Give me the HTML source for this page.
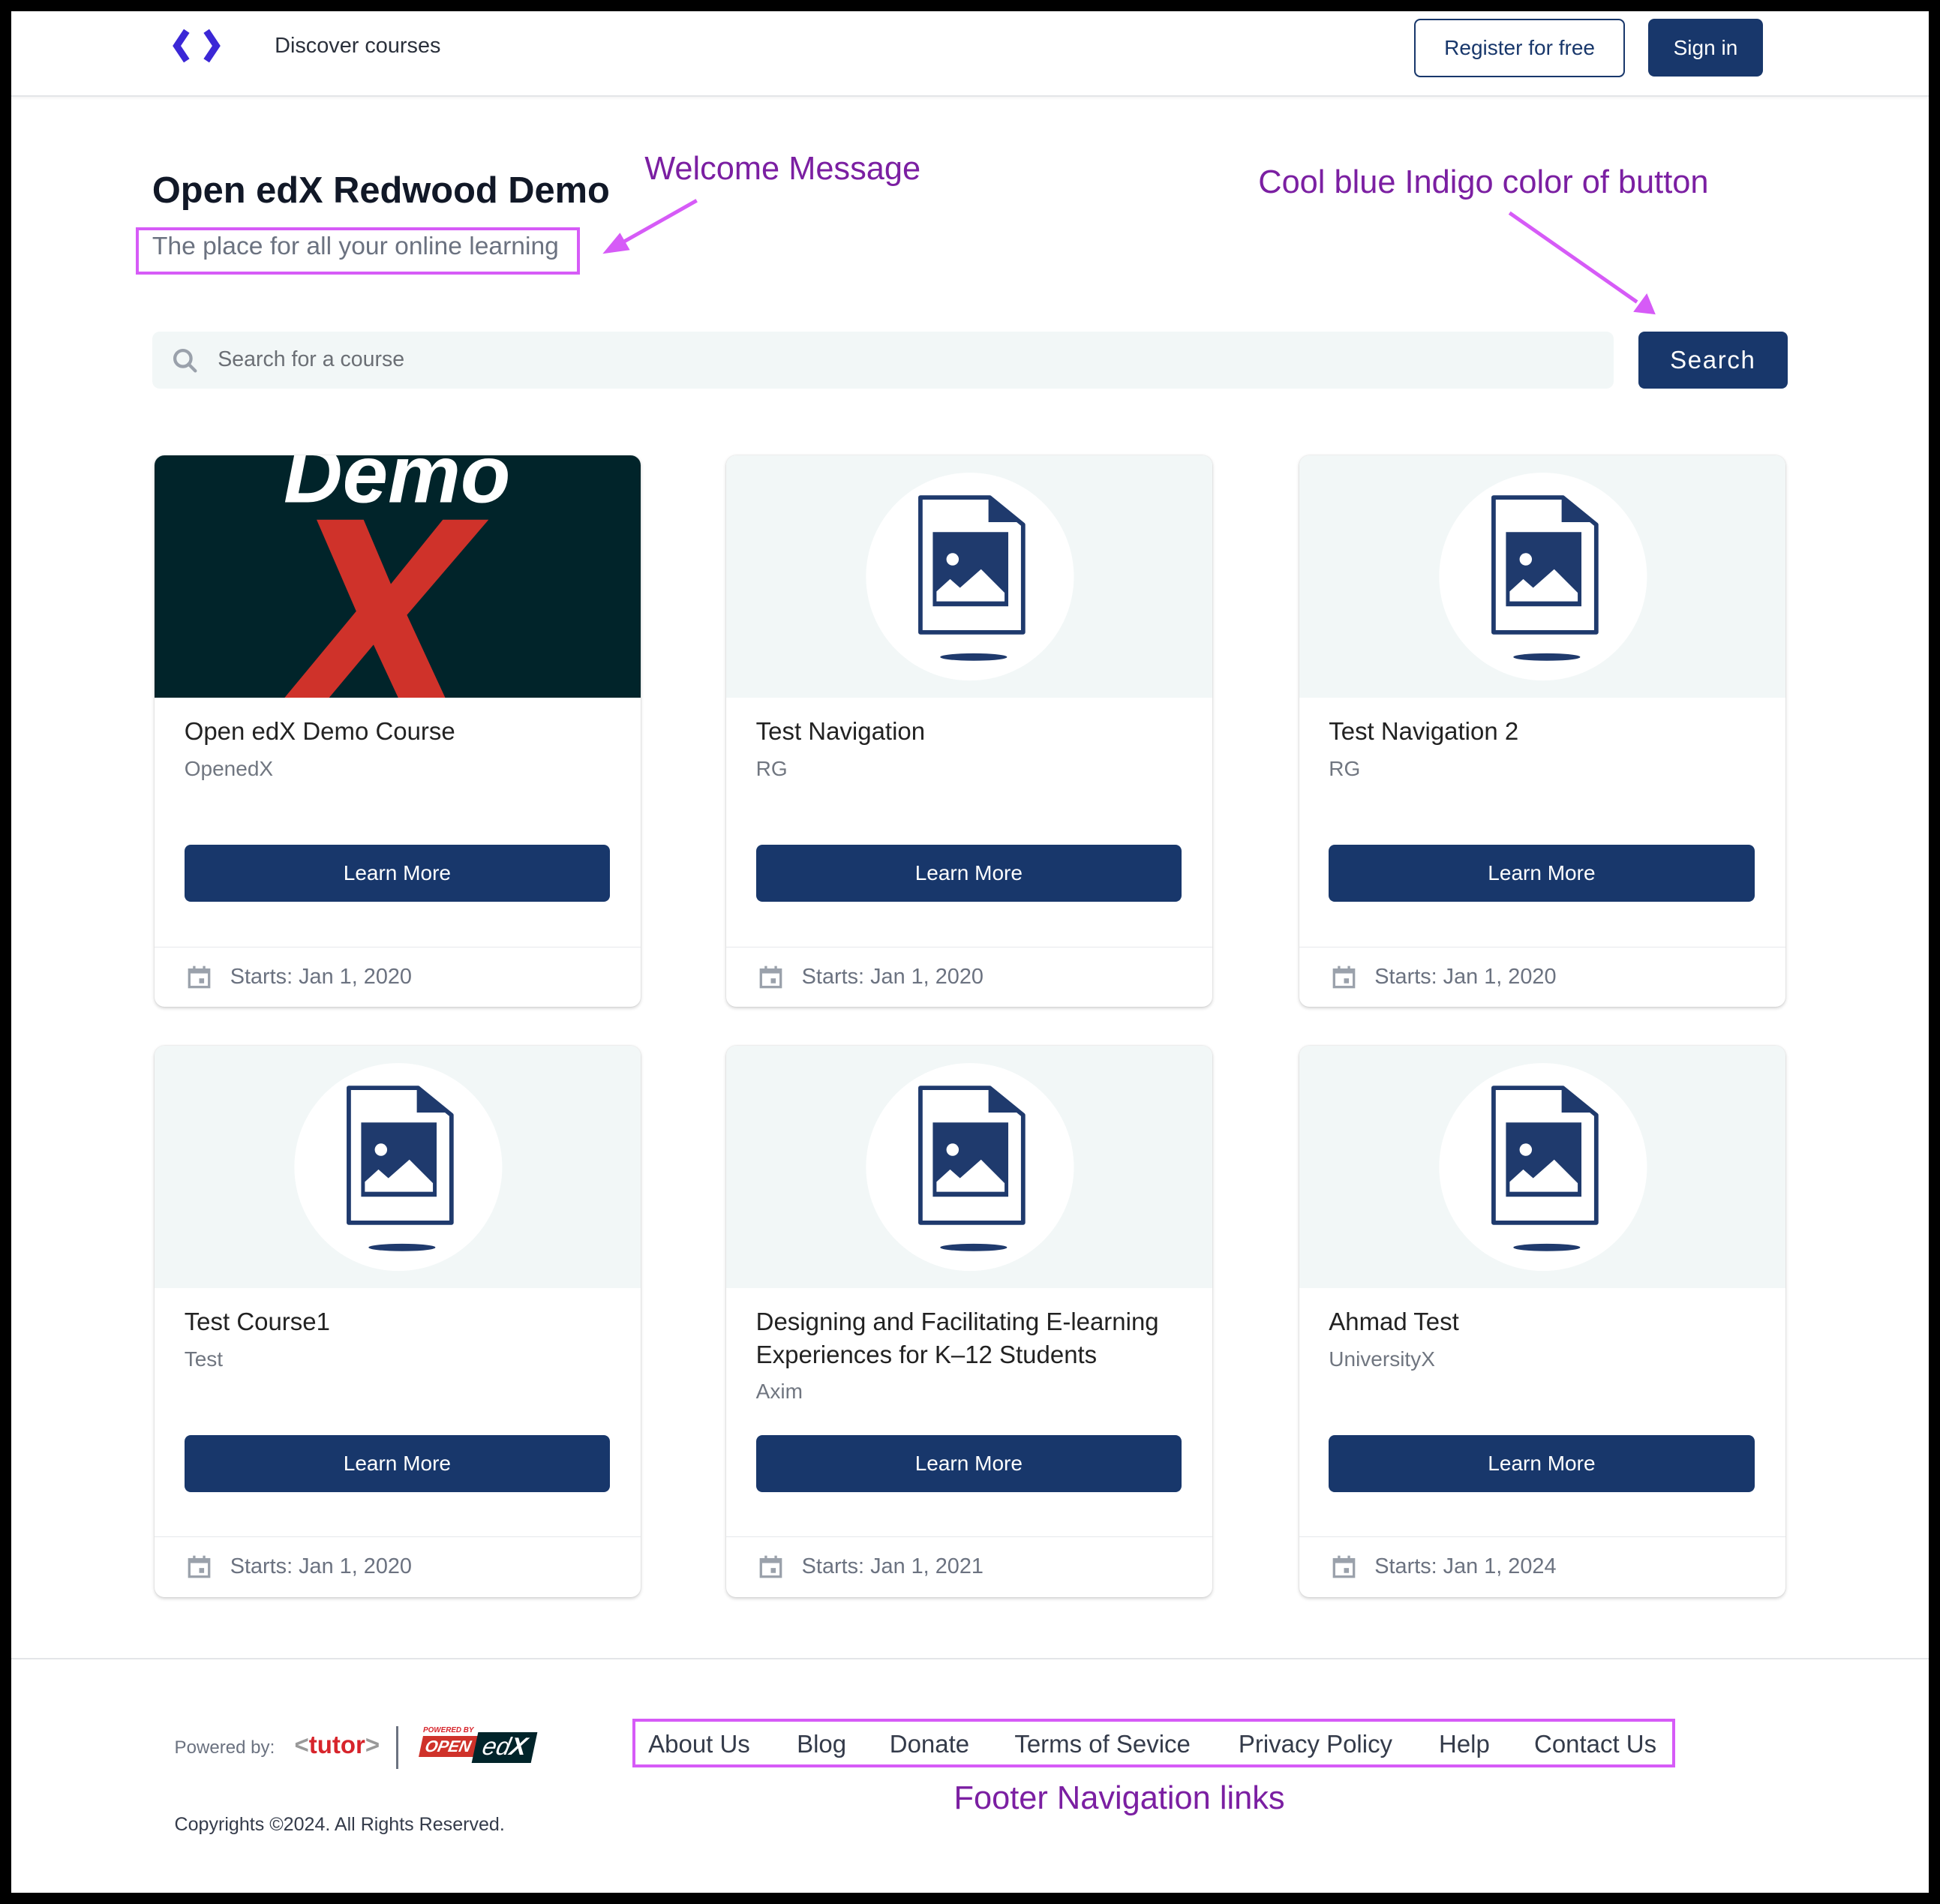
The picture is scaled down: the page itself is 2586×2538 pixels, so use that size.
<!DOCTYPE html>
<html><head><meta charset="utf-8"><style>
html,body{margin:0;padding:0;}
body{width:2586px;height:2538px;overflow:hidden;background:#000;}
#w{zoom:1.649235;width:1568px;height:1539px;position:relative;background:#000;font-family:"Liberation Sans",sans-serif;}
#pg{position:absolute;left:9px;top:9px;width:1550px;height:1521px;background:#fff;overflow:hidden;}
.a{position:absolute;white-space:nowrap;}
.card{position:absolute;width:393px;height:446px;background:#fff;border-radius:8px;box-shadow:0 1px 3px rgba(0,0,0,.18),0 0 1px rgba(0,0,0,.12);overflow:hidden;}
.img{position:absolute;left:0;top:0;width:393px;height:196px;background:#f2f7f7;}
.t{position:absolute;left:24px;top:210px;font-size:20px;color:#222;line-height:27px;width:350px;white-space:normal;}
.o{position:absolute;left:24px;font-size:17px;color:#707680;}
.btn{position:absolute;left:24px;top:315px;width:344px;height:46px;background:#18376b;border-radius:5px;color:#fff;font-size:17px;text-align:center;line-height:46px;}
.ft{position:absolute;left:0;top:397px;width:393px;height:49px;border-top:1px solid #e6e8ec;}
.ft span{position:absolute;left:61px;top:14px;font-size:17.5px;color:#6b7280;}
.ft svg{position:absolute;left:26px;top:14px;}
.ann{color:#7b1fa2;font-size:26.3px;}
.nav{position:absolute;top:0;font-size:20px;color:#343b4a;}
</style></head><body><div id="w"><div id="pg">
<div class="a" style="left:0;top:68px;width:1550px;height:1px;background:#e3e5e8;box-shadow:0 1px 2px rgba(0,0,0,.08)"></div>
<svg class="a" style="left:130px;top:14px" width="40" height="28" viewBox="0 0 40 28"><path d="M12 2 L4 14 L12 26" fill="none" stroke="#3b27d6" stroke-width="5.5" stroke-linejoin="miter"/><path d="M28 2 L36 14 L28 26" fill="none" stroke="#3b27d6" stroke-width="5.5" stroke-linejoin="miter"/></svg>
<div class="a" style="left:213px;top:18px;font-size:17.5px;color:#2a303b">Discover courses</div>
<div class="a" style="left:1134px;top:6px;width:168px;height:45px;border:1.5px solid #18376b;border-radius:5px;color:#18376b;font-size:17px;text-align:center;line-height:45px">Register for free</div>
<div class="a" style="left:1323px;top:6px;width:93px;height:47px;background:#18376b;border-radius:5px;color:#fff;font-size:17px;text-align:center;line-height:47px">Sign in</div>
<div class="a" style="left:114px;top:128px;font-size:29.6px;font-weight:bold;color:#111827">Open edX Redwood Demo</div>
<div class="a" style="left:101px;top:175px;width:354px;height:33px;border:3px solid #d65bf7"></div>
<div class="a" style="left:114px;top:179px;font-size:20.4px;color:#6b7280">The place for all your online learning</div>
<div class="a ann" style="left:512px;top:113px">Welcome Message</div>
<div class="a ann" style="left:1008px;top:124px">Cool blue Indigo color of button</div>
<svg class="a" style="left:0;top:0" width="1550" height="260"><line x1="554" y1="153" x2="492" y2="188" stroke="#d65bf7" stroke-width="3"/><polygon points="478,196 492,179 500,193" fill="#d65bf7"/><line x1="1211" y1="163" x2="1314" y2="235" stroke="#d65bf7" stroke-width="3"/><polygon points="1329,245 1311,243 1322,228" fill="#d65bf7"/></svg>
<div class="a" style="left:114px;top:259px;width:1181px;height:46px;background:#f2f7f7;border-radius:6px"></div>
<svg class="a" style="left:130px;top:272px" width="22" height="22" viewBox="0 0 22 22"><circle cx="9" cy="9" r="6.5" fill="none" stroke="#9aa1ab" stroke-width="2.6"/><line x1="13.5" y1="13.5" x2="19" y2="19" stroke="#9aa1ab" stroke-width="2.6" stroke-linecap="round"/></svg>
<div class="a" style="left:167px;top:272px;font-size:17.3px;color:#6b6f75">Search for a course</div>
<div class="a" style="left:1315px;top:259px;width:121px;height:46px;background:#18376b;border-radius:5px;color:#fff;font-size:20px;letter-spacing:1px;text-align:center;line-height:46px">Search</div>

<div class="card" style="left:116px;top:359px"><div class="img" style="background:#01242a"><svg width="393" height="196" viewBox="0 0 393 196"><text x="196" y="38" text-anchor="middle" fill="#fff" font-family="Liberation Sans" font-weight="bold" font-style="italic" font-size="66">Demo</text><polygon points="131,52 169,52 191,104 233,52 270,52 204,129 235,196 197,196 177,153 141,196 105,196 163,126" fill="#cf322a"/></svg></div>
<div class="t">Open edX Demo Course</div><div class="o" style="top:244px">OpenedX</div><div class="btn">Learn More</div>
<div class="ft"><svg width="20" height="20" viewBox="0 0 20 20"><rect x="2" y="4" width="16" height="14" fill="none" stroke="#9aa1ab" stroke-width="2"/><rect x="2" y="4" width="16" height="3" fill="#9aa1ab"/><rect x="5" y="1" width="2" height="4" fill="#9aa1ab"/><rect x="13" y="1" width="2" height="4" fill="#9aa1ab"/><rect x="10" y="11" width="4" height="4" fill="#9aa1ab"/></svg><span>Starts: Jan 1, 2020</span></div></div>

<div class="card" style="left:578px;top:359px"><div class="img"><svg width="393" height="196"><circle cx="197" cy="98" r="84" fill="#fff"/><path d="M157 34 H213 L240 56 V143 H157 Z" fill="none" stroke="#1f3a6d" stroke-width="3.5" stroke-linejoin="round"/><path d="M212 34 V54 H240 Z" fill="#1f3a6d"/><rect x="167" y="62" width="61" height="60" fill="#1f3a6d"/><circle cx="183" cy="84" r="5" fill="#fff"/><path d="M170 118 V110 L181 100 L189 107 L206 92 L225 111 V118 Z" fill="#fff"/><ellipse cx="200" cy="163" rx="27" ry="3" fill="#1f3a6d"/></svg></div>
<div class="t">Test Navigation</div><div class="o" style="top:244px">RG</div><div class="btn">Learn More</div>
<div class="ft"><svg width="20" height="20" viewBox="0 0 20 20"><rect x="2" y="4" width="16" height="14" fill="none" stroke="#9aa1ab" stroke-width="2"/><rect x="2" y="4" width="16" height="3" fill="#9aa1ab"/><rect x="5" y="1" width="2" height="4" fill="#9aa1ab"/><rect x="13" y="1" width="2" height="4" fill="#9aa1ab"/><rect x="10" y="11" width="4" height="4" fill="#9aa1ab"/></svg><span>Starts: Jan 1, 2020</span></div></div>

<div class="card" style="left:1041px;top:359px"><div class="img"><svg width="393" height="196"><circle cx="197" cy="98" r="84" fill="#fff"/><path d="M157 34 H213 L240 56 V143 H157 Z" fill="none" stroke="#1f3a6d" stroke-width="3.5" stroke-linejoin="round"/><path d="M212 34 V54 H240 Z" fill="#1f3a6d"/><rect x="167" y="62" width="61" height="60" fill="#1f3a6d"/><circle cx="183" cy="84" r="5" fill="#fff"/><path d="M170 118 V110 L181 100 L189 107 L206 92 L225 111 V118 Z" fill="#fff"/><ellipse cx="200" cy="163" rx="27" ry="3" fill="#1f3a6d"/></svg></div>
<div class="t">Test Navigation 2</div><div class="o" style="top:244px">RG</div><div class="btn">Learn More</div>
<div class="ft"><svg width="20" height="20" viewBox="0 0 20 20"><rect x="2" y="4" width="16" height="14" fill="none" stroke="#9aa1ab" stroke-width="2"/><rect x="2" y="4" width="16" height="3" fill="#9aa1ab"/><rect x="5" y="1" width="2" height="4" fill="#9aa1ab"/><rect x="13" y="1" width="2" height="4" fill="#9aa1ab"/><rect x="10" y="11" width="4" height="4" fill="#9aa1ab"/></svg><span>Starts: Jan 1, 2020</span></div></div>

<div class="card" style="left:116px;top:836px"><div class="img"><svg width="393" height="196"><circle cx="197" cy="98" r="84" fill="#fff"/><path d="M157 34 H213 L240 56 V143 H157 Z" fill="none" stroke="#1f3a6d" stroke-width="3.5" stroke-linejoin="round"/><path d="M212 34 V54 H240 Z" fill="#1f3a6d"/><rect x="167" y="62" width="61" height="60" fill="#1f3a6d"/><circle cx="183" cy="84" r="5" fill="#fff"/><path d="M170 118 V110 L181 100 L189 107 L206 92 L225 111 V118 Z" fill="#fff"/><ellipse cx="200" cy="163" rx="27" ry="3" fill="#1f3a6d"/></svg></div>
<div class="t">Test Course1</div><div class="o" style="top:244px">Test</div><div class="btn">Learn More</div>
<div class="ft"><svg width="20" height="20" viewBox="0 0 20 20"><rect x="2" y="4" width="16" height="14" fill="none" stroke="#9aa1ab" stroke-width="2"/><rect x="2" y="4" width="16" height="3" fill="#9aa1ab"/><rect x="5" y="1" width="2" height="4" fill="#9aa1ab"/><rect x="13" y="1" width="2" height="4" fill="#9aa1ab"/><rect x="10" y="11" width="4" height="4" fill="#9aa1ab"/></svg><span>Starts: Jan 1, 2020</span></div></div>

<div class="card" style="left:578px;top:836px"><div class="img"><svg width="393" height="196"><circle cx="197" cy="98" r="84" fill="#fff"/><path d="M157 34 H213 L240 56 V143 H157 Z" fill="none" stroke="#1f3a6d" stroke-width="3.5" stroke-linejoin="round"/><path d="M212 34 V54 H240 Z" fill="#1f3a6d"/><rect x="167" y="62" width="61" height="60" fill="#1f3a6d"/><circle cx="183" cy="84" r="5" fill="#fff"/><path d="M170 118 V110 L181 100 L189 107 L206 92 L225 111 V118 Z" fill="#fff"/><ellipse cx="200" cy="163" rx="27" ry="3" fill="#1f3a6d"/></svg></div>
<div class="t">Designing and Facilitating E-learning Experiences for K–12 Students</div><div class="o" style="top:270px">Axim</div><div class="btn">Learn More</div>
<div class="ft"><svg width="20" height="20" viewBox="0 0 20 20"><rect x="2" y="4" width="16" height="14" fill="none" stroke="#9aa1ab" stroke-width="2"/><rect x="2" y="4" width="16" height="3" fill="#9aa1ab"/><rect x="5" y="1" width="2" height="4" fill="#9aa1ab"/><rect x="13" y="1" width="2" height="4" fill="#9aa1ab"/><rect x="10" y="11" width="4" height="4" fill="#9aa1ab"/></svg><span>Starts: Jan 1, 2021</span></div></div>

<div class="card" style="left:1041px;top:836px"><div class="img"><svg width="393" height="196"><circle cx="197" cy="98" r="84" fill="#fff"/><path d="M157 34 H213 L240 56 V143 H157 Z" fill="none" stroke="#1f3a6d" stroke-width="3.5" stroke-linejoin="round"/><path d="M212 34 V54 H240 Z" fill="#1f3a6d"/><rect x="167" y="62" width="61" height="60" fill="#1f3a6d"/><circle cx="183" cy="84" r="5" fill="#fff"/><path d="M170 118 V110 L181 100 L189 107 L206 92 L225 111 V118 Z" fill="#fff"/><ellipse cx="200" cy="163" rx="27" ry="3" fill="#1f3a6d"/></svg></div>
<div class="t">Ahmad Test</div><div class="o" style="top:244px">UniversityX</div><div class="btn">Learn More</div>
<div class="ft"><svg width="20" height="20" viewBox="0 0 20 20"><rect x="2" y="4" width="16" height="14" fill="none" stroke="#9aa1ab" stroke-width="2"/><rect x="2" y="4" width="16" height="3" fill="#9aa1ab"/><rect x="5" y="1" width="2" height="4" fill="#9aa1ab"/><rect x="13" y="1" width="2" height="4" fill="#9aa1ab"/><rect x="10" y="11" width="4" height="4" fill="#9aa1ab"/></svg><span>Starts: Jan 1, 2024</span></div></div>

<div class="a" style="left:0;top:1331px;width:1550px;height:1px;background:#e3e5e8"></div>
<div class="a" style="left:132px;top:1395px;font-size:14.6px;color:#6b7280">Powered by:</div>
<div class="a" style="left:229px;top:1390px;font-size:20px;font-weight:bold;color:#d7242b"><span style="color:#999">&lt;</span>tutor<span style="color:#999">&gt;</span></div>
<div class="a" style="left:311px;top:1386px;width:2px;height:35px;background:#6b7280"></div>
<div class="a" style="left:333px;top:1386px;font-size:6px;color:#d7242b;font-style:italic;font-weight:bold">POWERED BY</div>
<div class="a" style="left:331px;top:1394px;width:44px;height:17px;background:#cf322a;transform:skewX(-12deg);color:#fff;font-size:13px;font-style:italic;font-weight:bold;line-height:17px;text-align:center">OPEN</div>
<div class="a" style="left:375px;top:1391px;width:48px;height:25px;background:#01242a;transform:skewX(-12deg);color:#fff;font-size:20px;font-style:italic;line-height:23px;text-align:center">ed<b>X</b></div>
<div class="a" style="left:132px;top:1457px;font-size:15.2px;color:#343b4a">Copyrights ©2024. All Rights Reserved.</div>
<div class="a" style="left:502px;top:1380px;width:838px;height:35px;border:3px solid #d65bf7"></div>
<div class="a" style="left:0;top:1389px;width:1550px;height:30px">
<span class="nav" style="left:515px">About Us</span><span class="nav" style="left:635px">Blog</span><span class="nav" style="left:710px">Donate</span><span class="nav" style="left:811px">Terms of Sevice</span><span class="nav" style="left:992px">Privacy Policy</span><span class="nav" style="left:1154px">Help</span><span class="nav" style="left:1231px">Contact Us</span></div>
<div class="a ann" style="left:762px;top:1430px">Footer Navigation links</div>
</div></div></body></html>
